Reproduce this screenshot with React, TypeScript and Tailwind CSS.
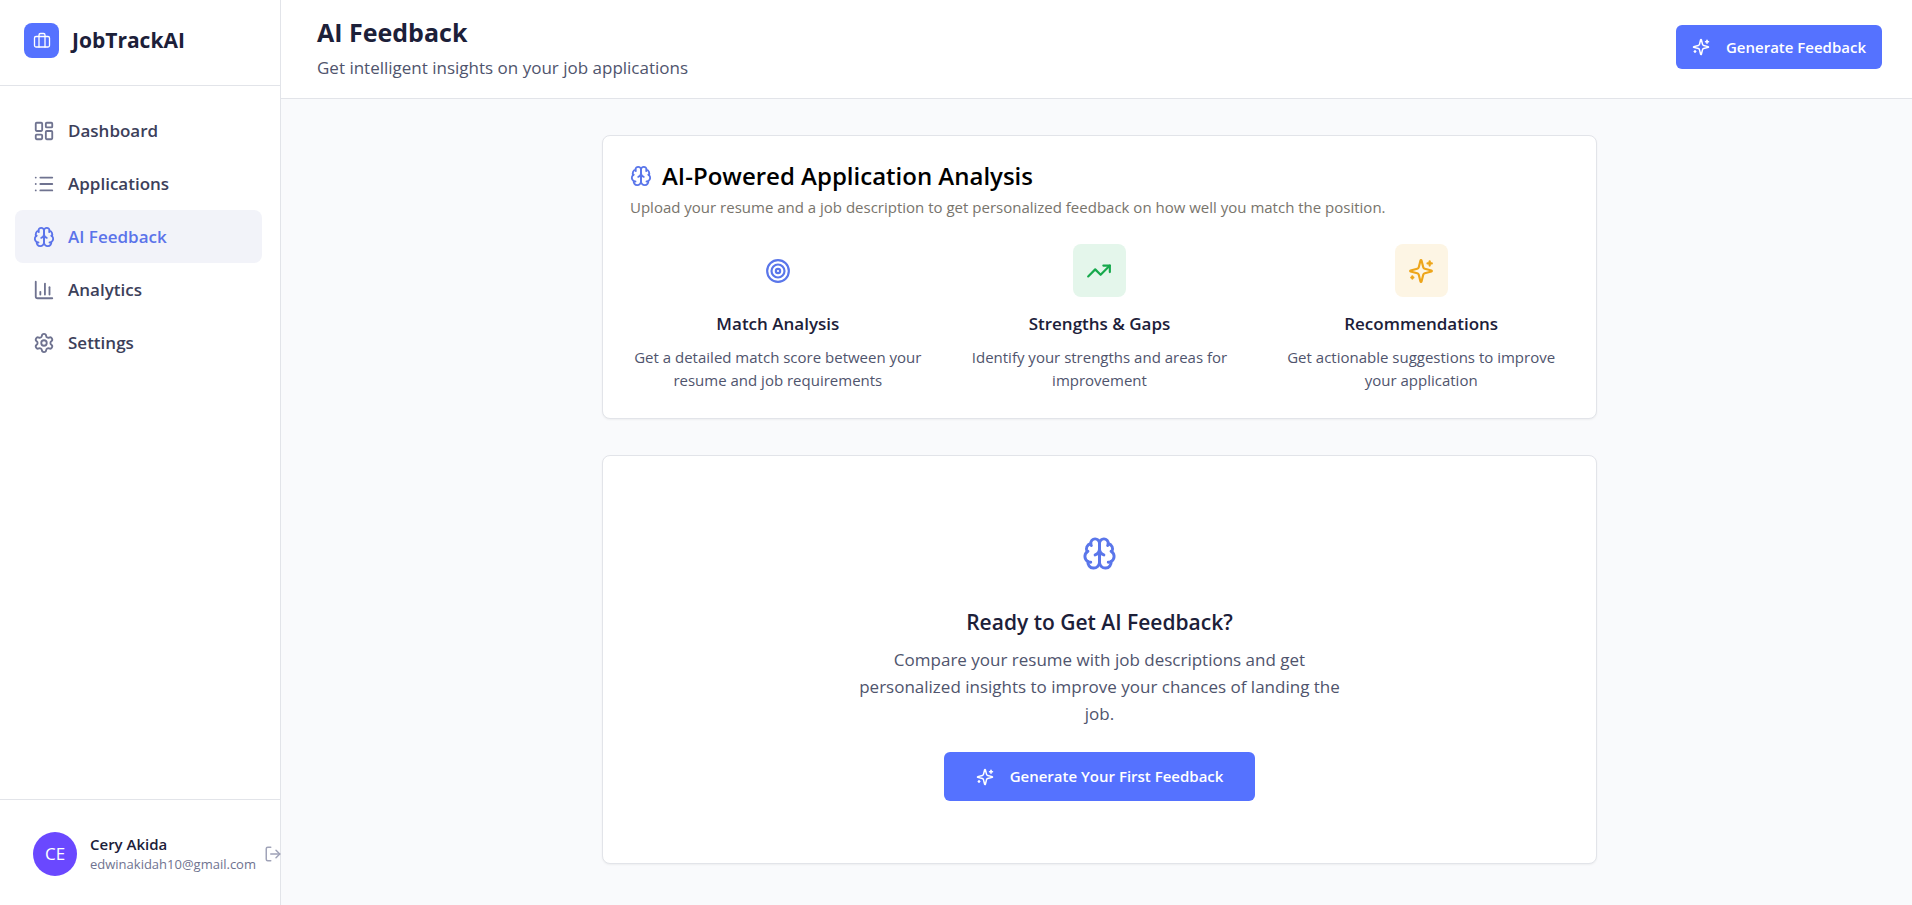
import type { ReactNode } from "react";
import { BarChart3, Briefcase, LayoutDashboard, List, LogOut, Settings, Target, TrendingUp } from "lucide-react";

type IconProps = { className?: string };

function Stroke({ className, children }: IconProps & { children: ReactNode }) {
  return (
    <svg
      viewBox="0 0 24 24"
      fill="none"
      stroke="currentColor"
      strokeWidth={2}
      strokeLinecap="round"
      strokeLinejoin="round"
      aria-hidden="true"
      className={className}
    >
      {children}
    </svg>
  );
}

function Brain({ className }: IconProps) {
  return (
    <Stroke className={className}>
      <path d="M12 5a3 3 0 1 0-5.997.125 4 4 0 0 0-2.526 5.77 4 4 0 0 0 .556 6.588A4 4 0 1 0 12 18Z" />
      <path d="M12 5a3 3 0 1 1 5.997.125 4 4 0 0 1 2.526 5.77 4 4 0 0 1-.556 6.588A4 4 0 1 1 12 18Z" />
      <path d="M15 13a4.5 4.5 0 0 1-3-4 4.5 4.5 0 0 1-3 4" />
      <path d="M17.599 6.5a3 3 0 0 0 .399-1.375" />
      <path d="M6.003 5.125A3 3 0 0 0 6.401 6.5" />
      <path d="M3.477 10.896a4 4 0 0 1 .585-.396" />
      <path d="M19.938 10.5a4 4 0 0 1 .585.396" />
      <path d="M6 18a4 4 0 0 1-1.967-.516" />
      <path d="M19.967 17.484A4 4 0 0 1 18 18" />
    </Stroke>
  );
}

function Sparkles({ className }: IconProps) {
  return (
    <Stroke className={className}>
      <path d="M9.937 15.5A2 2 0 0 0 8.5 14.063l-6.135-1.582a.5.5 0 0 1 0-.962L8.5 9.936A2 2 0 0 0 9.937 8.5l1.582-6.135a.5.5 0 0 1 .963 0L14.063 8.5A2 2 0 0 0 15.5 9.937l6.135 1.581a.5.5 0 0 1 0 .964L15.5 14.063a2 2 0 0 0-1.437 1.437l-1.582 6.135a.5.5 0 0 1-.963 0z" />
      <path d="M20 3v4" />
      <path d="M22 5h-4" />
      <path d="M4 17v2" />
      <path d="M5 18H3" />
    </Stroke>
  );
}

const navItems = [
  { label: "Dashboard", Icon: LayoutDashboard, active: false },
  { label: "Applications", Icon: List, active: false },
  { label: "AI Feedback", Icon: Brain, active: true },
  { label: "Analytics", Icon: BarChart3, active: false },
  { label: "Settings", Icon: Settings, active: false },
];

const features = [
  {
    title: "Match Analysis",
    text: "Get a detailed match score between your resume and job requirements",
    Icon: Target,
    tone: "text-[#5a76ea]",
  },
  {
    title: "Strengths & Gaps",
    text: "Identify your strengths and areas for improvement",
    Icon: TrendingUp,
    tone: "bg-[#e4f6eb] text-[#16a94c]",
  },
  {
    title: "Recommendations",
    text: "Get actionable suggestions to improve your application",
    Icon: Sparkles,
    tone: "bg-[#fdf5e4] text-[#eda51a]",
  },
];

function Sidebar() {
  return (
    <aside className="flex w-[281px] shrink-0 flex-col border-r border-[#e2e4e9] bg-white">
      <div className="flex h-[86px] items-center gap-[13px] border-b border-[#e2e4e9] px-6 pb-1">
        <span className="flex size-[35px] items-center justify-center rounded-lg bg-[#5572ff] text-white">
          <Briefcase className="size-[18px]" strokeWidth={1.75} />
        </span>
        <span className="text-[21px] font-bold text-[#1c2039]">JobTrackAI</span>
      </div>
      <nav className="flex-1 pt-[18px] pr-[18px] pl-[15px]">
        <ul>
          {navItems.map(({ label, Icon, active }) => (
            <li key={label}>
              <a
                href="#"
                aria-current={active ? "page" : undefined}
                className={
                  active
                    ? "flex h-[53px] items-center gap-[13px] rounded-lg bg-[#f2f3f9] px-[18px] text-[17px] font-semibold text-[#5b73ea]"
                    : "flex h-[53px] items-center gap-[13px] rounded-lg px-[18px] text-[17px] font-semibold text-[#3c405a]"
                }
              >
                <Icon className={active ? "size-[22px]" : "size-[22px] text-[#6f7390]"} />
                {label}
              </a>
            </li>
          ))}
        </ul>
      </nav>
      <div className="flex h-[106px] items-center border-t border-[#e2e4e9] pt-0.5 pl-[33px]">
        <span className="flex size-11 shrink-0 items-center justify-center rounded-full bg-[#6a48ff] text-[17px] text-white">
          CE
        </span>
        <div className="ml-[13px] shrink-0">
          <p className="text-[15px] leading-5 font-semibold text-[#1c2039]">Cery Akida</p>
          <p className="text-[13px] leading-5 text-[#6f7390]">edwinakidah10@gmail.com</p>
        </div>
        <button type="button" aria-label="Log out" className="ml-2 shrink-0 text-[#a0a3b8]">
          <LogOut className="size-[18px]" />
        </button>
      </div>
    </aside>
  );
}

export default function App() {
  return (
    <div className="flex min-h-screen bg-[#f9fafc] font-['Open_Sans','Noto_Sans',sans-serif]">
      <Sidebar />
      <div className="flex min-w-0 flex-1 flex-col">
        <header className="flex h-[99px] items-center justify-between border-b border-[#e2e4e9] bg-white pr-[30px] pb-1 pl-9">
          <div className="pt-0.5">
            <h1 className="text-[25px] leading-9 font-bold text-[#1c2039]">AI Feedback</h1>
            <p className="mt-1 text-[17px] leading-7 text-[#4f546d]">Get intelligent insights on your job applications</p>
          </div>
          <button
            type="button"
            className="flex h-11 items-center rounded-md bg-[#5572ff] px-4 text-[15px] font-semibold text-white"
          >
            <Sparkles className="mr-4 size-[18px]" />
            Generate Feedback
          </button>
        </header>

        <main className="py-9 pl-1.5">
          <div className="mx-auto flex max-w-[995px] flex-col gap-9">
            <section className="rounded-lg border border-[#e2e4e9] bg-white px-[27px] pt-[22px] pb-[26px] shadow-xs">
              <h2 className="flex items-center gap-2.5 text-[24px] leading-9 font-semibold text-black">
                <Brain className="size-[22px] text-[#5a76ea]" />
                AI-Powered Application Analysis
              </h2>
              <p className="text-[15px] leading-[26px] text-[#78746c]">
                Upload your resume and a job description to get personalized feedback on how well you match the position.
              </p>
              <div className="mt-6 grid grid-cols-3 gap-[26px] text-center">
                {features.map(({ title, text, Icon, tone }) => (
                  <div key={title}>
                    <div className={`mx-auto flex size-[53px] items-center justify-center rounded-lg ${tone}`}>
                      <Icon className="size-[26px]" />
                    </div>
                    <h3 className="mt-[13px] text-[17px] leading-7 font-semibold text-[#1c2039]">{title}</h3>
                    <p className="mt-2 text-[15px] leading-[23px] text-[#4f546d]">{text}</p>
                  </div>
                ))}
              </div>
            </section>

            <section className="flex flex-col items-center rounded-lg border border-[#e2e4e9] bg-white px-[27px] pt-[80px] pb-[62px] text-center shadow-xs">
              <Brain className="size-[35px] text-[#5a76ea]" />
              <h3 className="mt-[35px] text-[21px] leading-8 font-semibold text-[#1c2039]">Ready to Get AI Feedback?</h3>
              <p className="mt-2 max-w-[493px] text-[17px] leading-[27px] text-[#4f546d]">
                Compare your resume with job descriptions and get personalized insights to improve your chances of
                landing the job.
              </p>
              <button
                type="button"
                className="mt-[25px] flex h-[49px] items-center rounded-md bg-[#5572ff] px-8 text-[15px] font-semibold text-white"
              >
                <Sparkles className="mr-4 size-[18px]" />
                Generate Your First Feedback
              </button>
            </section>
          </div>
        </main>
      </div>
    </div>
  );
}
